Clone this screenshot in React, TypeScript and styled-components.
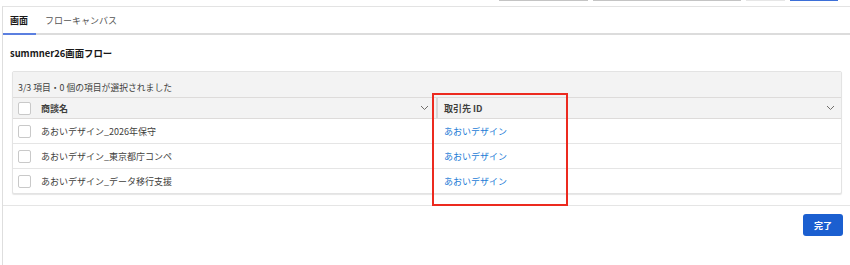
import React from 'react';
import styled, { createGlobalStyle } from 'styled-components';

const GlobalStyle = createGlobalStyle`
  html, body {
    margin: 0;
    padding: 0;
    background: #ffffff;
  }
  body {
    font-family: "Noto Sans CJK JP", "Noto Sans", "Liberation Sans", sans-serif;
    color: #3e3e3c;
    font-size: 9px;
  }
`;

const Page = styled.div`
  width: 850px;
  height: 265px;
  overflow: hidden;
  display: flex;
  flex-direction: column;
`;

const Toolbar = styled.div`
  height: 6px;
  display: flex;
  align-items: flex-start;
  padding-left: 499px;
  gap: 5px;
`;

const Stub = styled.div<{ $w: number; $color: string }>`
  width: ${(p) => p.$w}px;
  height: 1px;
  background: ${(p) => p.$color};
`;

const Panel = styled.div`
  flex: 1;
  margin-left: 2px;
  border-left: 1px solid #dedede;
  border-top: 1px solid #e3e3e3;
  display: flex;
  flex-direction: column;
`;

const Tabs = styled.div`
  display: flex;
  height: 26px;
  border-bottom: 2px solid #dcdcdc;
`;

const Tab = styled.div<{ $active?: boolean }>`
  display: flex;
  align-items: center;
  padding: 0 8px 0 7px;
  margin-bottom: -2px;
  border-bottom: 2px solid ${(p) => (p.$active ? '#5b7fe0' : 'transparent')};
  color: ${(p) => (p.$active ? '#181818' : '#555555')};
  font-weight: ${(p) => (p.$active ? 700 : 400)};
  font-size: 9px;
  & + & {
    padding-left: 9px;
  }
`;

const Body = styled.div`
  padding: 12px 8px 11px 7px;
  border-bottom: 1px solid #e5e5e5;
`;

const Title = styled.h2`
  margin: 0 0 11px 0;
  font-size: 9.4px;
  line-height: 13px;
  font-weight: 700;
  color: #181818;
`;

const CardWrap = styled.div`
  position: relative;
  margin-left: 2px;
`;

const Card = styled.div`
  border: 1px solid #e3e3e3;
  border-radius: 2px;
  box-shadow: 0 1px 1px rgba(0, 0, 0, 0.1);
  background: #ffffff;
`;

const InfoBar = styled.div`
  background: #f3f3f3;
  padding: 11px 5px 4px;
  line-height: 10px;
  font-size: 8.8px;
  color: #3e3e3c;
`;

const HeaderRow = styled.div`
  display: flex;
  height: 20px;
  background: #f3f3f3;
  border-top: 1px solid #dddbda;
  border-bottom: 1px solid #dddbda;
  font-weight: 700;
  color: #3e3e3c;
`;

const Row = styled.div`
  display: flex;
  height: 24px;
  border-bottom: 1px solid #e5e5e5;
  &:last-child {
    border-bottom: none;
  }
`;

const NameCell = styled.div`
  width: 423px;
  display: flex;
  align-items: center;
  padding-left: 5px;
  padding-right: 7px;
  box-sizing: border-box;
  gap: 10px;
`;

const AccountCell = styled.div<{ $head?: boolean }>`
  flex: 1;
  display: flex;
  align-items: center;
  padding: 0 6px 0 6px;
  border-left: ${(p) => (p.$head ? '2px solid #d8d8d8' : 'none')};
  margin-left: ${(p) => (p.$head ? '0' : '2px')};
`;

const Label = styled.span`
  flex: 1;
  white-space: nowrap;
`;

const Check = styled.span`
  width: 11px;
  height: 11px;
  border: 1px solid #c9c9c9;
  border-radius: 2px;
  background: #ffffff;
  flex-shrink: 0;
`;

const Link = styled.a`
  color: #1a7bd6;
  text-decoration: none;
  white-space: nowrap;
`;

const Chevron = () => (
  <svg width="9" height="6" viewBox="0 0 9 6" fill="none">
    <path d="M1 1l3.5 3.5L8 1" stroke="#706e6b" strokeWidth="1" />
  </svg>
);

const Highlight = styled.div`
  position: absolute;
  left: 420px;
  top: 22px;
  width: 132px;
  height: 109px;
  border: 2px solid #ec2a1f;
  pointer-events: none;
`;

const Footer = styled.div`
  display: flex;
  justify-content: flex-end;
  padding: 8px 7px 0 0;
`;

const DoneButton = styled.button`
  width: 40px;
  height: 22px;
  border: none;
  border-radius: 3px;
  background: #1b5fd0;
  color: #ffffff;
  font-family: inherit;
  font-size: 9px;
  font-weight: 700;
  padding: 0;
`;

const rows = [
  'あおいデザイン_2026年保守',
  'あおいデザイン_東京都庁コンペ',
  'あおいデザイン_データ移行支援',
];

export default function App() {
  return (
    <>
      <GlobalStyle />
      <Page>
        <Toolbar>
          <Stub $w={89} $color="#c4c4c4" />
          <Stub $w={148} $color="#c4c4c4" />
          <Stub $w={39} $color="#e6e6e6" />
          <Stub $w={48} $color="#3c6fd8" />
        </Toolbar>
        <Panel>
          <Tabs>
            <Tab $active>画面</Tab>
            <Tab>フローキャンバス</Tab>
          </Tabs>
          <Body>
            <Title>summner26画面フロー</Title>
            <CardWrap>
              <Card>
                <InfoBar>3/3 項目・0 個の項目が選択されました</InfoBar>
                <HeaderRow>
                  <NameCell>
                    <Check />
                    <Label>商談名</Label>
                    <Chevron />
                  </NameCell>
                  <AccountCell $head>
                    <Label>取引先 ID</Label>
                    <Chevron />
                  </AccountCell>
                </HeaderRow>
                {rows.map((name) => (
                  <Row key={name}>
                    <NameCell>
                      <Check />
                      <Label>{name}</Label>
                    </NameCell>
                    <AccountCell>
                      <Link href="#">あおいデザイン</Link>
                    </AccountCell>
                  </Row>
                ))}
              </Card>
              <Highlight />
            </CardWrap>
          </Body>
          <Footer>
            <DoneButton>完了</DoneButton>
          </Footer>
        </Panel>
      </Page>
    </>
  );
}
